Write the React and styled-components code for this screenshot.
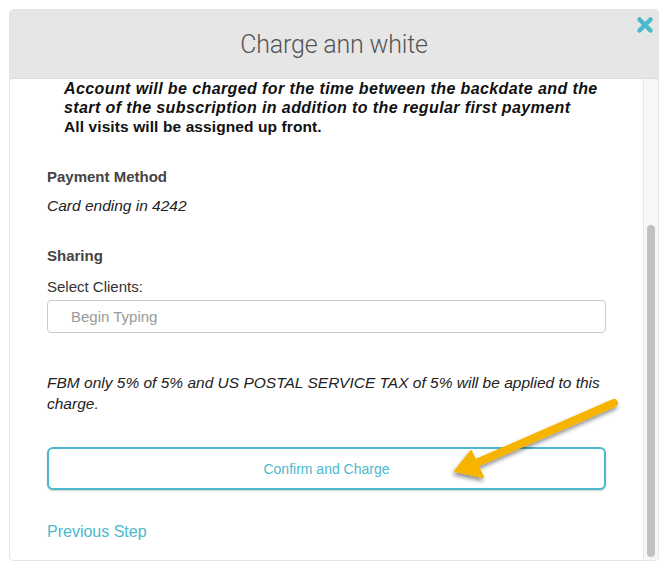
import React from "react";
import styled, { createGlobalStyle } from "styled-components";

const GlobalStyle = createGlobalStyle`
  html, body {
    margin: 0;
    padding: 0;
    background: #ffffff;
  }
  body {
    font-family: "Liberation Sans", Arial, sans-serif;
    color: #333;
  }
`;

const Page = styled.div`
  width: 672px;
  height: 576px;
  padding: 9px 14px 0 9px;
  box-sizing: border-box;
  position: relative;
  overflow: hidden;
`;

const Modal = styled.div`
  width: 650px;
  height: 552px;
  display: flex;
  flex-direction: column;
  border: 1px solid #e4e4e4;
  border-radius: 4px;
  box-sizing: border-box;
  overflow: hidden;
  background: #fff;
`;

const Header = styled.div`
  position: relative;
  height: 69px;
  flex: none;
  background: #e6e6e6;
  display: flex;
  align-items: center;
  justify-content: center;
  border-bottom: 1px solid #dcdcdc;
  box-sizing: border-box;
`;

const Title = styled.h2`
  margin: 0;
  font-family: Roboto, "Liberation Sans", sans-serif;
  font-weight: 300;
  font-size: 25px;
  color: #555;
  letter-spacing: -0.2px;
`;

const Close = styled.button`
  position: absolute;
  top: 6px;
  right: 4px;
  width: 18px;
  height: 18px;
  padding: 0;
  border: none;
  background: none;
  cursor: pointer;
`;

const BodyRow = styled.div`
  flex: 1;
  display: flex;
  min-height: 0;
`;

const Content = styled.div`
  flex: 1;
  padding: 0 37px;
  overflow: hidden;
`;

const Track = styled.div`
  width: 15px;
  flex: none;
  background: #f7f7f7;
  border-left: 1px solid #e8e8e8;
  box-sizing: border-box;
  padding: 146px 3px 3px 3px;
  display: flex;
`;

const Thumb = styled.div`
  flex: 1;
  background: #c1c1c1;
  border-radius: 5px;
`;

const Notice = styled.div`
  padding-left: 17px;
  font-size: 15.5px;
  line-height: 19px;
  color: #111;
  font-weight: bold;
  letter-spacing: 0.1px;
`;

const NoticeItalic = styled.div`
  font-style: italic;
  font-size: 16px;
  letter-spacing: 0.4px;
`;

const SectionTitle = styled.div`
  font-size: 15px;
  line-height: 20px;
  font-weight: bold;
  color: #444;
  margin-top: ${(p) => p.$top || 31}px;
`;

const Italic = styled.div`
  font-size: 15.5px;
  line-height: 21px;
  font-style: italic;
  color: #222;
  margin-top: ${(p) => p.$top || 0}px;
`;

const Label = styled.div`
  font-size: 15px;
  line-height: 20px;
  color: #333;
  margin-top: 11px;
`;

const Input = styled.input`
  display: block;
  width: 100%;
  height: 33px;
  margin-top: 3px;
  box-sizing: border-box;
  border: 1px solid #cccccc;
  border-radius: 4px;
  padding: 0 23px;
  font-family: "Liberation Sans", Arial, sans-serif;
  font-size: 15px;
  color: #333;
  outline: none;
  &::placeholder {
    color: #999;
  }
`;

const ConfirmButton = styled.button`
  display: block;
  width: 100%;
  height: 43px;
  margin-top: 33px;
  border: 2px solid #4ab9cd;
  border-radius: 6px;
  background: #fff;
  color: #4ab9cd;
  font-family: "Liberation Sans", Arial, sans-serif;
  font-size: 14px;
  box-shadow: 0 1px 2px rgba(0, 0, 0, 0.2);
  cursor: pointer;
`;

const PrevLink = styled.a`
  display: block;
  margin-top: 32px;
  font-size: 16px;
  line-height: 20px;
  color: #4ab9cd;
  text-decoration: none;
`;

const Arrow = styled.svg`
  position: absolute;
  left: 0;
  top: 0;
  pointer-events: none;
`;

function CloseIcon() {
  return (
    <svg width="18" height="18" viewBox="0 0 18 18">
      <path d="M3.5 3.5 L14.5 14.5 M14.5 3.5 L3.5 14.5" stroke="#4ab9cd" strokeWidth="4.5" strokeLinecap="round" />
    </svg>
  );
}

export default function App() {
  return (
    <>
      <GlobalStyle />
      <Page>
        <Modal>
          <Header>
            <Title>Charge ann white</Title>
            <Close aria-label="close">
              <CloseIcon />
            </Close>
          </Header>
          <BodyRow>
            <Content>
              <Notice>
                <NoticeItalic>
                  Account will be charged for the time between the backdate and the
                  <br />
                  start of the subscription in addition to the regular first payment
                </NoticeItalic>
                All visits will be assigned up front.
              </Notice>
              <SectionTitle>Payment Method</SectionTitle>
              <Italic $top={8}>Card ending in 4242</Italic>
              <SectionTitle $top={30}>Sharing</SectionTitle>
              <Label>Select Clients:</Label>
              <Input placeholder="Begin Typing" />
              <Italic $top={39}>
                FBM only 5% of 5% and US POSTAL SERVICE TAX of 5% will be applied to this charge.
              </Italic>
              <ConfirmButton>Confirm and Charge</ConfirmButton>
              <PrevLink href="#">Previous Step</PrevLink>
            </Content>
            <Track>
              <Thumb />
            </Track>
          </BodyRow>
        </Modal>
        <Arrow width="672" height="576">
          <defs>
            <filter id="sh" x="-20%" y="-20%" width="140%" height="160%">
              <feDropShadow dx="-1" dy="3" stdDeviation="2" floodColor="#000" floodOpacity="0.45" />
            </filter>
          </defs>
          <g filter="url(#sh)">
            <line x1="614" y1="403" x2="474" y2="464" stroke="#f6b400" strokeWidth="8" strokeLinecap="round" />
            <polygon points="455,471 471,451 483,477" fill="#f6b400" stroke="#f6b400" strokeWidth="2" strokeLinejoin="round" />
          </g>
        </Arrow>
      </Page>
    </>
  );
}
